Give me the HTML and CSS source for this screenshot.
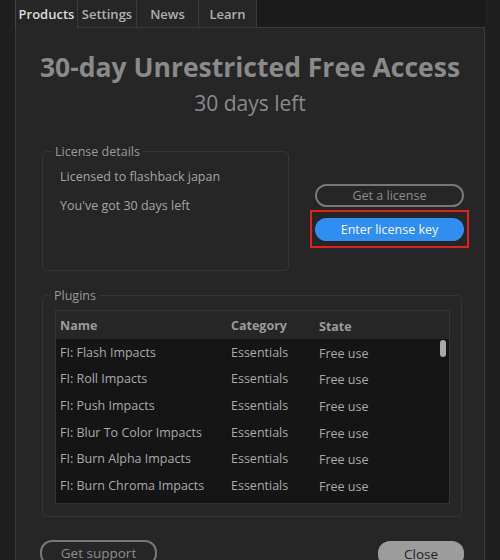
FILE: index.html
```html
<!DOCTYPE html>
<html>
<head>
<meta charset="utf-8">
<link rel="stylesheet" href="styles.css">
</head>
<body>
<div class="app">
  <div class="tabs">
    <div class="tab active">Products</div>
    <div class="tab t-settings">Settings</div>
    <div class="tab t-news">News</div>
    <div class="tab t-learn">Learn</div>
    <div class="tab-fill"></div>
  </div>
  <div class="panel">
    <h1 class="title">30-day Unrestricted Free Access</h1>
    <div class="subtitle">30 days left</div>
    <div class="license-row">
      <fieldset class="group license">
        <legend>License details</legend>
        <p>Licensed to flashback japan</p>
        <p>You've got 30 days left</p>
      </fieldset>
      <div class="actions">
        <button class="pill outline">Get a license</button>
        <div class="highlight">
          <button class="pill blue">Enter license key</button>
        </div>
      </div>
    </div>
    <fieldset class="group plugins">
      <legend>Plugins</legend>
      <div class="table">
        <div class="thead row">
          <span class="c-name">Name</span><span class="c-cat">Category</span><span class="c-state">State</span>
        </div>
        <div class="tbody">
          <div class="row"><span class="c-name">FI: Flash Impacts</span><span class="c-cat">Essentials</span><span class="c-state">Free use</span></div>
          <div class="row"><span class="c-name">FI: Roll Impacts</span><span class="c-cat">Essentials</span><span class="c-state">Free use</span></div>
          <div class="row"><span class="c-name">FI: Push Impacts</span><span class="c-cat">Essentials</span><span class="c-state">Free use</span></div>
          <div class="row"><span class="c-name">FI: Blur To Color Impacts</span><span class="c-cat">Essentials</span><span class="c-state">Free use</span></div>
          <div class="row"><span class="c-name">FI: Burn Alpha Impacts</span><span class="c-cat">Essentials</span><span class="c-state">Free use</span></div>
          <div class="row"><span class="c-name">FI: Burn Chroma Impacts</span><span class="c-cat">Essentials</span><span class="c-state">Free use</span></div>
          <div class="thumb"></div>
        </div>
      </div>
    </fieldset>
    <div class="footer">
      <button class="pill outline support">Get support</button>
      <button class="pill gray close">Close</button>
    </div>
  </div>
</div>
</body>
</html>
```

FILE: styles.css
```css
html, body {
  margin: 0;
  padding: 0;
  background: #1f1f1f;
}
body {
  width: 500px;
  height: 560px;
  overflow: hidden;
  font-family: "Open Sans", "Liberation Sans", sans-serif;
  color: #9c9c9c;
}
.app {
  padding-left: 15px;
  width: 470px;
}
.tabs {
  display: flex;
  height: 28px;
  background: #1b1b1b;
}
.tab {
  box-sizing: border-box;
  height: 28px;
  display: flex;
  align-items: center;
  justify-content: center;
  font-size: 13px;
  font-weight: 600;
  color: #b0b0b0;
  background: #262626;
  border-left: 1px solid #3a3a3a;
  border-bottom: 1px solid #3a3a3a;
  white-space: nowrap;
}
.tab.active {
  width: 62px;
  color: #dcdcdc;
  background: #262626;
  border-left: 1px solid #444;
  border-bottom: none;
}
.t-settings { width: 59px; }
.t-news { width: 62px; }
.t-learn { width: 59px; border-right: 1px solid #3a3a3a; }
.tab-fill {
  flex: 1;
  border-bottom: 1px solid #3a3a3a;
}
.panel {
  box-sizing: border-box;
  height: 532px;
  background: #262626;
  border-left: 1px solid #3a3a3a;
  border-right: 1px solid #3a3a3a;
  padding-top: 22px;
}
.title {
  margin: 0;
  text-align: center;
  white-space: nowrap;
  font-size: 26.5px;
  line-height: 34px;
  font-weight: bold;
  color: #8a8a8a;
}
.subtitle {
  margin-top: 6px;
  text-align: center;
  font-size: 21px;
  line-height: 26px;
  color: #8a8a8a;
}
.group {
  margin: 0;
  border: 1px solid #353535;
  border-radius: 5px;
  min-width: 0;
}
.group legend {
  font-size: 12.5px;
  color: #9a9a9a;
  padding: 0 3px;
}
.license legend { margin-left: -8px; }
.plugins legend { margin-left: -4px; }
.license-row {
  display: flex;
  margin-top: 27px;
  padding-left: 26px;
}
.license {
  box-sizing: border-box;
  width: 247px;
  height: 128px;
  padding: 8px 14px 0 17px;
}
.license p {
  margin: 0 0 12px 0;
  font-size: 12.5px;
  line-height: 17px;
  color: #a4a4a4;
}
.actions {
  display: flex;
  flex-direction: column;
  margin-left: 21px;
  padding-top: 41px;
}
.pill {
  box-sizing: border-box;
  font-family: inherit;
  font-size: 12.5px;
  border-radius: 12px;
  padding: 0;
  cursor: pointer;
}
.outline {
  background: transparent;
  border: 2px solid #777;
  color: #8c8c8c;
}
.actions .pill {
  width: 149px;
  height: 23px;
}
.actions .outline {
  margin-left: 5px;
}
.highlight {
  margin-top: 3px;
  border: 2px solid #e0211d;
  padding: 5px 4px 5px 3px;
  width: 159px;
  box-sizing: border-box;
}
.blue {
  background: #2e8ef2;
  border: none;
  color: #f4f8ff;
}
.plugins {
  box-sizing: border-box;
  width: 420px;
  height: 230px;
  margin: 16px 0 0 26px;
  padding: 6px 11px 0 12px;
}
.table {
  border: 1px solid #333;
}
.row {
  display: flex;
  align-items: center;
  height: 26.6px;
  font-size: 12.5px;
  color: #aaaaaa;
  white-space: nowrap;
}
.thead {
  height: 28px;
  font-weight: bold;
  color: #9a9a9a;
  background: #262626;
}
.c-name { width: 171px; padding-left: 4px; }
.c-cat { width: 88px; }
.c-state { flex: 1; padding-top: 2px; }
.tbody {
  position: relative;
  background: #151515;
  height: 164px;
}
.thumb {
  position: absolute;
  right: 3px;
  top: 1px;
  width: 6px;
  height: 17px;
  border-radius: 3px;
  background: #a8a8a8;
}
.footer {
  display: flex;
  justify-content: space-between;
  padding: 23px 20px 0 24px;
}
.footer .pill {
  height: 26px;
  font-size: 13.5px;
}
.support {
  width: 117px;
}
.gray {
  width: 86px;
  background: #9c9c9c;
  border: none;
  color: #222;
  margin-top: 1px;
}
```
